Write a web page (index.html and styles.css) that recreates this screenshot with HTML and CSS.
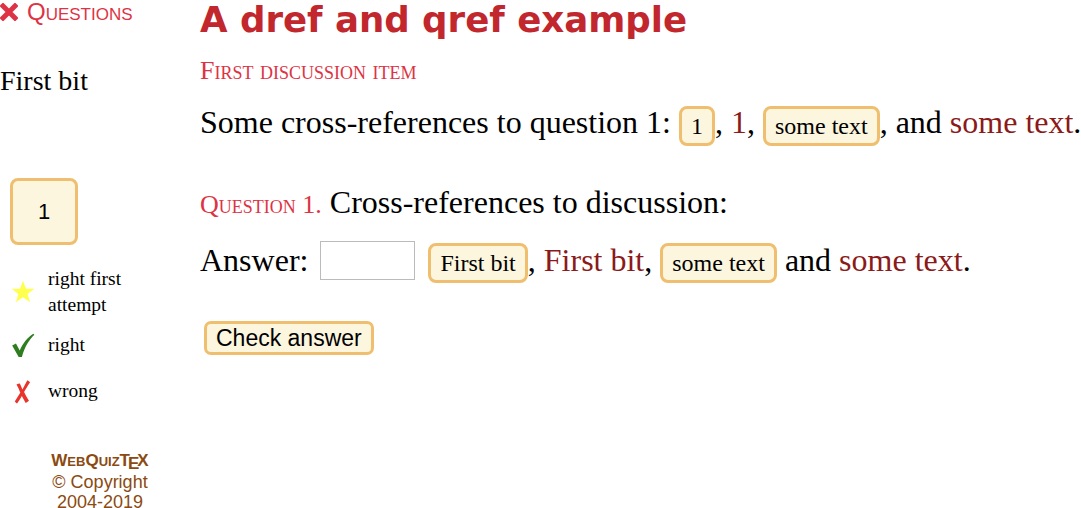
FILE: index.html
```html
<!DOCTYPE html>
<html>
<head>
<meta charset="utf-8">
<link rel="stylesheet" href="styles.css">
</head>
<body>
<div class="page">
  <aside class="side">
    <div class="side-title"><svg class="xicon" width="18" height="18" viewBox="0 0 18 18"><path d="M3 3 L15 15 M15 3 L3 15" stroke="#dd3344" stroke-width="5" stroke-linecap="square"/></svg><span class="sc">Questions</span></div>
    <div class="side-item">First bit</div>
    <div class="qbox">1</div>
    <div class="legend">
      <div class="lrow">
        <svg class="licon" width="26" height="26" viewBox="0 0 24 24"><polygon points="12,1.5 14.7,9 22.5,9 16.2,13.8 18.6,21.5 12,16.8 5.4,21.5 7.8,13.8 1.5,9 9.3,9" fill="#ffff4d"/></svg>
        <span>right first<br>attempt</span>
      </div>
      <div class="lrow r2">
        <svg class="licon" width="26" height="26" viewBox="0 0 24 24"><path d="M2 12.5 L5.5 10.5 L9 17 C12 10 16 5 21.5 1.5 L22.5 2.5 C17.5 7.5 13.5 13.5 11 23 L8 23 Z" fill="#2e7d1f"/></svg>
        <span>right</span>
      </div>
      <div class="lrow r3">
        <svg class="licon" width="26" height="26" viewBox="0 0 24 24"><path d="M16 2 C17 2.5 18 3 18.5 4 C16 8 14 11 13 13 C14.5 16 16 19 17.5 21 C16.5 22 15.5 22.5 14.5 23 C13 20.5 12 18.5 11 16.5 C9.5 19 8 21.5 6.5 23.5 C5.5 23 5 22.5 4.5 21.5 C6 19 8 16 9.5 13.5 C8.5 11 7.5 8.5 6 6 C7 5.5 8 5 9 5 C10 7 11 9 11.5 10.5 C13 7.5 14.5 4.5 16 2 Z" fill="#e8352b"/></svg>
        <span>wrong</span>
      </div>
    </div>
    <div class="footer">
      <div class="brand">W<small>EB</small>Q<small>UIZ</small>T<span class="e">E</span>X</div>
      <div>© Copyright</div>
      <div>2004-2019</div>
    </div>
  </aside>
  <main class="main">
    <h1 class="title">A dref and qref example</h1>
    <h2 class="section">First discussion item</h2>
    <p class="para">Some cross-references to question 1: <span class="btn">1</span>, <span class="link">1</span>, <span class="btn">some text</span>, and <span class="link">some text</span>.</p>
    <p class="question"><span class="qlabel">Question 1.</span> Cross-references to discussion:</p>
    <p class="answer">Answer: <span class="input"></span> <span class="btn">First bit</span>, <span class="link">First bit</span>, <span class="btn">some text</span> and <span class="link">some text</span>.</p>
    <div class="check">Check answer</div>
  </main>
</div>
</body>
</html>
```
FILE: styles.css
```css
html, body { margin: 0; padding: 0; background: #fff; overflow: hidden; }
body { font-family: "Liberation Serif", "Times New Roman", serif; color: #000; }
.page { display: flex; }
.side { width: 200px; flex: none; }
.side-title { font-family: "Liberation Sans", Arial, sans-serif; color: #dd3344; font-size: 24px; line-height: 24px; display: flex; align-items: center; gap: 9px; }
.xicon { flex: none; margin-left: 0; }
.sc { font-variant: small-caps; }
.side-item { font-size: 28px; margin-top: 41px; line-height: 32px; }
.qbox { margin: 81px 0 0 10px; width: 62px; height: 61px; border: 3px solid #efbf6f; background: #fdf6df; border-radius: 8px; display: flex; align-items: center; justify-content: center; font-family: "Liberation Sans", Arial, sans-serif; font-size: 22px; }
.legend { margin-top: 21px; display: flex; flex-direction: column; }
.lrow { display: flex; align-items: center; font-size: 19.5px; line-height: 26px; }
.r2 { margin-top: 14px; }
.r3 { margin-top: 20px; }
.licon { margin: 0 12px 0 10px; flex: none; }
.footer { margin-top: 47px; text-align: center; width: 200px; font-family: "Liberation Sans", Arial, sans-serif; color: #8b4a12; font-size: 18px; line-height: 20px; }
.brand { font-weight: bold; font-size: 17px; }
.brand small { font-size: 13px; }
.brand .e { position: relative; top: 3px; margin: 0 -2px; }
.main { flex: 1; min-width: 0; }
.title { font-family: "DejaVu Sans", Verdana, sans-serif; font-weight: bold; color: #c1272d; font-size: 35.6px; line-height: 40px; margin: 0; white-space: nowrap; }
.section { font-variant: small-caps; font-weight: normal; color: #dd3344; font-size: 26px; margin: 16px 0 0; line-height: 30px; }
.para { font-size: 32px; line-height: 44px; margin: 14px 0 0; white-space: nowrap; }
.btn { display: inline-block; font-size: 24px; line-height: 28px; padding: 3px 9px; border: 3px solid #efbf6f; background: #fdf6df; border-radius: 8px; vertical-align: middle; }
.link { color: #8b1a1a; }
.question { font-size: 32px; line-height: 44px; margin: 34px 0 0; }
.qlabel { font-variant: small-caps; color: #dd3344; font-size: 26px; }
.answer { font-size: 32px; line-height: 44px; margin: 11px 0 0; white-space: nowrap; }
.input { display: inline-block; width: 93px; height: 37px; border: 1px solid #bbb; vertical-align: middle; margin: 0 5px 6px 4px; }
.check { width: fit-content; margin: 35px 0 0 4px; font-family: "Liberation Sans", Arial, sans-serif; font-size: 23px; line-height: 26px; padding: 1px 9px; border: 3px solid #efbf6f; background: #fdf6df; border-radius: 7px; }
```
